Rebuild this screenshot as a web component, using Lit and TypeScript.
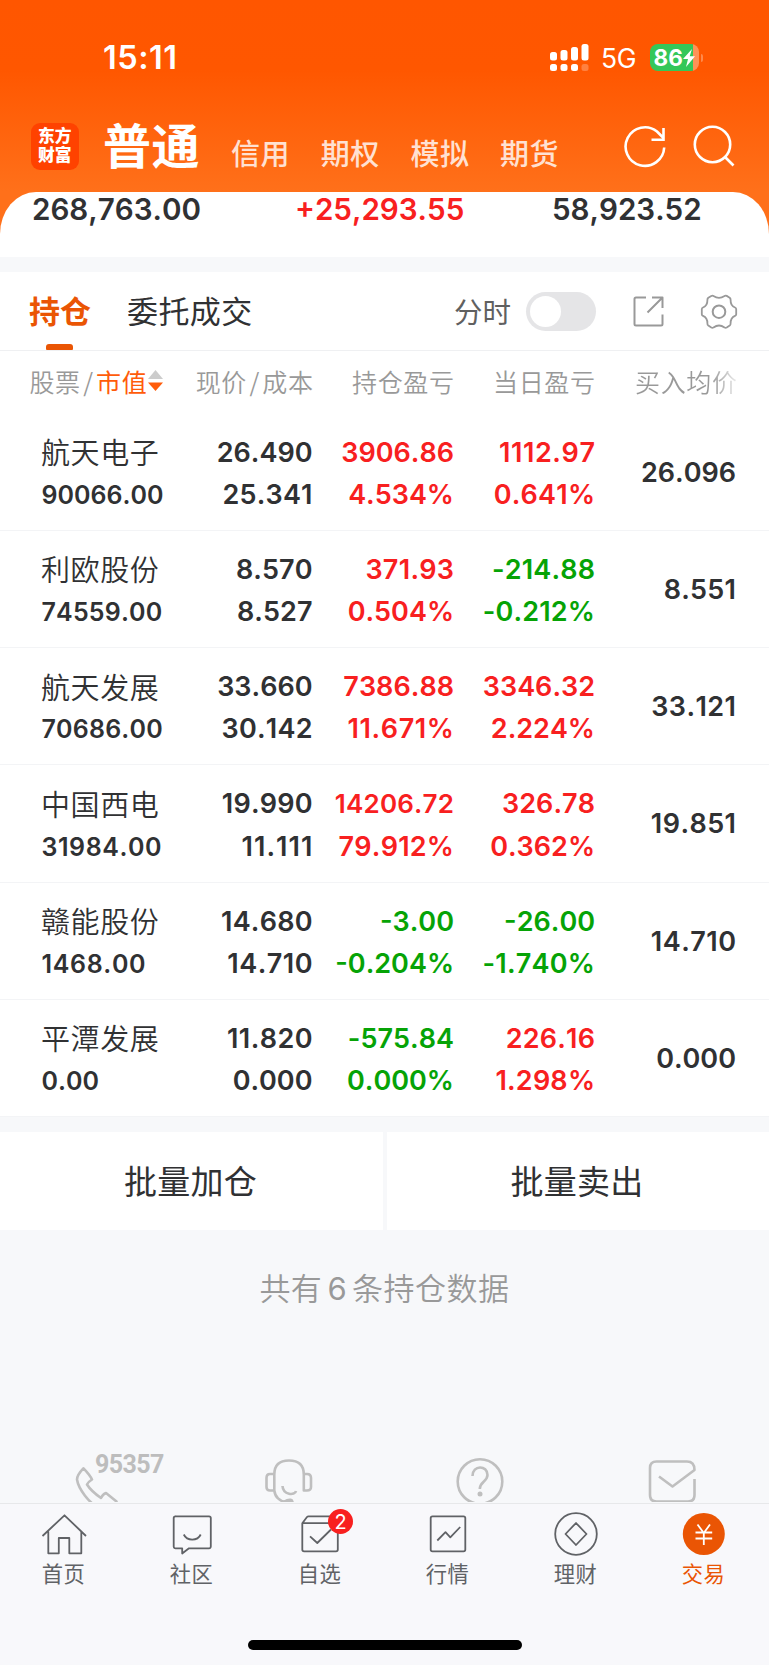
import { LitElement, html, css, svg } from "lit";
import { customElement } from "lit/decorators.js";
import { classMap } from "lit/directives/class-map.js";
import { styleMap } from "lit/directives/style-map.js";

interface Holding {
  name: string;
  value: string;
  price: string;
  cost: string;
  profit: string;
  profitRate: string;
  day: string;
  dayRate: string;
  avg: string;
  profitDown?: boolean;
  dayDown?: boolean;
}

const HOLDINGS: Holding[] = [
  { name: "航天电子", value: "90066.00", price: "26.490", cost: "25.341", profit: "3906.86", profitRate: "4.534%", day: "1112.97", dayRate: "0.641%", avg: "26.096" },
  { name: "利欧股份", value: "74559.00", price: "8.570", cost: "8.527", profit: "371.93", profitRate: "0.504%", day: "-214.88", dayRate: "-0.212%", avg: "8.551", dayDown: true },
  { name: "航天发展", value: "70686.00", price: "33.660", cost: "30.142", profit: "7386.88", profitRate: "11.671%", day: "3346.32", dayRate: "2.224%", avg: "33.121" },
  { name: "中国西电", value: "31984.00", price: "19.990", cost: "11.111", profit: "14206.72", profitRate: "79.912%", day: "326.78", dayRate: "0.362%", avg: "19.851" },
  { name: "赣能股份", value: "1468.00", price: "14.680", cost: "14.710", profit: "-3.00", profitRate: "-0.204%", day: "-26.00", dayRate: "-1.740%", avg: "14.710", profitDown: true, dayDown: true },
  { name: "平潭发展", value: "0.00", price: "11.820", cost: "0.000", profit: "-575.84", profitRate: "0.000%", day: "226.16", dayRate: "1.298%", avg: "0.000", profitDown: true },
];

const count = (text: string, ch: string) => text.split(ch).length - 1;

/** Evens out a figure's width: narrow digits get their missing advance back as tracking. */
const tracked = (text: string, one = 1.3, seven = 0.3) => {
  const extra = (count(text, "1") * one + count(text, "7") * seven) / text.length;
  return styleMap({ letterSpacing: `${extra.toFixed(2)}px`, marginRight: `${(-extra).toFixed(2)}px` });
};

const figure = (text: string) =>
  html`<span class=${classMap({ small: text.length > 7 && !text.includes("%") })} style=${tracked(text)}>${text}</span>`;

const TABS = [
  { label: "首页", icon: svg`<path d="M42.500 1536 64.500 1515.300 86 1536M48.300 1531.500V1553.300H58.800V1538H69.300V1553.300H81.300V1531.500"/>` },
  { label: "社区", icon: svg`<path d="M175.500 1516.300H209a1.800 1.800 0 0 1 1.800 1.800V1546.500a1.800 1.800 0 0 1-1.800 1.800H189L182.200 1553.500V1548.300H175.500a1.800 1.800 0 0 1-1.800-1.800V1518.100a1.800 1.800 0 0 1 1.800-1.800Z"/><path d="M183.800 1534.500C187 1541.400 197.500 1541.400 200.700 1534.500"/>` },
  { label: "自选", icon: svg`<path d="M302.300 1523.200 307 1517a2 2 0 0 1 1.500-.700H331.500a2 2 0 0 1 1.500.7L337.800 1523.200V1549.500a1.800 1.800 0 0 1-1.800 1.800H304.100a1.800 1.800 0 0 1-1.800-1.800ZM302.300 1523.200H337.800M310 1536.300 317.300 1543 331 1529.500"/>` },
  { label: "行情", icon: svg`<rect x="430.700" y="1516.300" width="34.600" height="35" rx="1.800"/><path d="M437.300 1540.500 445.500 1532.200 450.300 1537.300 460.200 1527"/>` },
  { label: "理财", icon: svg`<circle cx="576" cy="1534" r="20.800"/><path d="M576 1523 586.500 1534 576 1545 565.500 1534Z"/>` },
  { label: "交易", icon: svg`<circle cx="703.800" cy="1534" r="21" fill="#ea5504" stroke="none"/><path d="M697.500 1524.500 703.800 1533 710 1524.500M703.800 1533V1545M695.500 1532.500H712.200M695.500 1538.500H712.200" stroke="#fff"/>`, active: true },
];

@customElement("app-root")
export class AppRoot extends LitElement {
  static styles = css`
    :host { display: block; width: 769px; height: 1665px; overflow: hidden; background: #f7f8fa; color: #303133; font-family: "Noto Sans CJK SC", sans-serif; }
    * { box-sizing: border-box; }
    svg { display: block; fill: none; flex: none; }
    .page { display: flex; flex-direction: column; height: 1665px; }
    .num { font-family: Inter, sans-serif; font-weight: 580; font-kerning: none; }
    .top { height: 257px; background: linear-gradient(#ff5600 0, #ff5700 70px, #ff701a 191px); display: flex; flex-direction: column; flex: none; }
    .status { height: 115px; display: flex; align-items: center; padding: 0 66px 0 103px; color: #fff; flex: none; }
    .time { font-size: 32.500px; flex: 1; letter-spacing: .5px; }
    .net { font-family: Inter, sans-serif; font-size: 26.500px; font-weight: 420; margin: 1px 13px 0 12px; letter-spacing: -.3px; width: 36px; }
    .battery { display: flex; align-items: center; }
    .level { width: 48.500px; height: 27px; border-radius: 8px; background: linear-gradient(90deg, #34c759 42.500px, #ff9257 42.500px); display: flex; align-items: center; padding-left: 3.500px; font-size: 22.500px; font-weight: 700; }
    .nub { width: 2.500px; height: 8px; background: #ff8a4b; border-radius: 0 3px 3px 0; margin-left: 2px; }
    .nav { height: 76.500px; display: flex; flex: none; color: #fff; padding-left: 31px; }
    .nav-tools { margin-left: auto; }
    .logo { margin-top: 8px; width: 47.500px; height: 47px; border-radius: 9px; background: #ff4200; padding: 2.500px 0 0 7px; font-size: 16.800px; line-height: 19.500px; font-weight: 900; flex: none; }
    .main-tab { font-size: 48px; line-height: 60px; font-weight: 700; margin: -2px 0 0 24.500px; width: 98px; letter-spacing: .5px; flex: none; }
    .modes { display: flex; gap: 30.700px; margin: 17px 0 0 30px; font-size: 29px; line-height: 40px; font-weight: 500; color: #ffe1d2; letter-spacing: .5px; }
    .sheet { flex: 1; border-radius: 36px 36px 0 0 / 42px 42px 0 0; background: #fff; display: grid; grid-template-columns: 263px 257px 1fr; padding: 0 0 0 32px; font-size: 29.600px; line-height: 35px; }
    .up { color: #f8201f; }
    .down { color: #06a306; }
    .band { height: 15px; flex: none; }
    .panel { background: #fff; flex: none; }
    .tabs { height: 79px; border-bottom: 1px solid #eff0f2; display: flex; align-items: stretch; padding-left: 29px; }
    .tab { width: 61px; color: #ea5504; font-size: 31px; line-height: 76px; font-weight: 700; position: relative; white-space: nowrap; }
    .bar { position: absolute; left: 17px; bottom: 0; width: 27px; height: 6px; border-radius: 3px 3px 1px 1px; background: #ea5504; }
    .orders { margin-left: 37px; font-size: 31px; line-height: 76px; width: 124px; letter-spacing: .4px; white-space: nowrap; }
    .split { margin-left: 203px; font-size: 28.500px; line-height: 77px; color: #606060; width: 58px; white-space: nowrap; }
    .switch { margin: 20px 0 0 14px; width: 70px; height: 39px; border-radius: 20px; background: #e5e5e7; padding: 4px; flex: none; }
    .knob { width: 31px; height: 31px; border-radius: 50%; background: #fff; }
    .tools { margin: 19px 0 0 35px; }
    .cols { display: grid; grid-template-columns: 166px 118px 141px 141px 142px; padding: 10px 0 0 29.500px; height: 62.500px; align-items: start; font-size: 25px; line-height: 40px; font-weight: 350; color: #999; text-align: right; letter-spacing: .6px; white-space: nowrap; }
    .sort { display: flex; text-align: left; align-items: center; }
    .sort svg { margin-left: 1px; }
    .slash { margin: 0 2.500px; }
    .sort b { color: #ff5c0a; font-weight: 400; }
    .fade { background: linear-gradient(90deg, #999 74%, #e8e8e8 98%); -webkit-background-clip: text; background-clip: text; color: transparent; justify-self: end; }
    .row { height: 117.300px; border-bottom: 1.500px solid #f3f4f6; display: grid; grid-template-columns: 124px 147.500px 141.500px 141px 141px; padding: 18px 0 0 41px; font-size: 27px; line-height: 42.300px; text-align: right; }
    .cell { display: flex; flex-direction: column; }
    .small { font-size: 26px; }
    .name { text-align: left; font-family: "Noto Sans CJK SC", sans-serif; font-size: 29px; font-weight: 350; letter-spacing: .6px; white-space: nowrap; position: relative; top: -1.500px; }
    .value { text-align: left; font-size: 25px; padding-left: .5px; }
    .avg { padding-top: 20px; }
    .batch { display: grid; grid-template-columns: 382.500px 382.500px; gap: 4px; height: 98px; flex: none; }
    .batch div { background: #fff; text-align: center; font-size: 33px; line-height: 96px; letter-spacing: .3px; padding-right: 1.500px; }
    .total { height: 208px; padding-top: 37px; text-align: center; color: #999; font-size: 31px; line-height: 40px; font-weight: 350; letter-spacing: .5px; flex: none; }
    .total span { font-family: Inter, sans-serif; margin: 0 5px; font-weight: 400; }
    .service { display: flex; height: 64.500px; position: relative; overflow: hidden; flex: none; }
    .hotline { position: absolute; left: 95px; top: 12px; font: 700 25px/30px Roboto, sans-serif; color: #bdbdbd; letter-spacing: -.6px; }
    .footer { border-top: 1.500px solid #e7e8ea; height: 162.500px; background: #f8f8fb; display: flex; flex-direction: column; flex: none; }
    .menu { display: grid; grid-template-columns: repeat(6, 128px); height: 136px; padding-top: 6.500px; }
    .item { display: flex; flex-direction: column; align-items: center; color: #606266; font-size: 21.300px; line-height: 30px; letter-spacing: .5px; position: relative; }
    .item svg { stroke: #606266; stroke-width: 1.800; }
    .label { margin-left: -1px; }
    .active { color: #ea5504; }
    .badge { position: absolute; left: 72px; top: -1px; width: 25px; height: 25px; border-radius: 50%; background: #f8201f; color: #fff; font: 400 20px/26px Inter, sans-serif; text-align: center; letter-spacing: 0; }
    .home { width: 274px; height: 10px; border-radius: 5px; background: #000; align-self: center; }
  `;

  render() {
    return html`<div class="page">
      <div class="top">
        <div class="status">
          <span class="time num">15:11</span>
          <svg width="39" height="29" viewBox="0 0 39 29">
            <g fill="#fff"><rect x="0" y="9" width="7" height="8.500" rx="2.500"/><rect x="10.500" y="7" width="7" height="10.500" rx="2.500"/><rect x="21" y="4" width="7" height="13.500" rx="2.500"/><rect x="31.500" y="1" width="7" height="16.500" rx="2.500"/>
            <rect x="0" y="21" width="7" height="7" rx="2.500"/><rect x="10.500" y="21" width="7" height="7" rx="2.500"/><rect x="21" y="21" width="7" height="7" rx="2.500"/><rect x="31.500" y="21" width="7" height="7" rx="2.500" opacity=".25"/></g>
          </svg>
          <span class="net">5G</span>
          <div class="battery"><div class="level num">86<svg width="12" height="18" viewBox="0 0 12 18"><path d="M9 0 0 10H5L3 18 12 7.300H6.700Z" fill="#fff"/></svg></div><div class="nub"></div></div>
        </div>
        <div class="nav">
          <div class="logo">东方<br>财富</div>
          <div class="main-tab">普通</div>
          <div class="modes"><span>信用</span><span>期权</span><span>模拟</span><span>期货</span></div>
          <svg class="nav-tools" width="145" height="76" viewBox="624 115 145 76" stroke="#fff" stroke-width="2.600"><path d="M664.200 147.500A19.300 19.300 0 1 1 657 131.500L663.500 138M663.500 128V139.700H651.500"/><circle cx="712.500" cy="144.500" r="17.700"/><path d="M725 157 733.500 165.500"/></svg>
        </div>
        <div class="sheet num"><span>268,763.00</span><span class="up">+25,293.55</span><span>58,923.52</span></div>
      </div>
      <div class="band"></div>
      <div class="panel">
        <div class="tabs">
          <div class="tab">持仓<i class="bar"></i></div>
          <div class="orders">委托成交</div>
          <div class="split">分时</div>
          <div class="switch"><div class="knob"></div></div>
          <svg class="tools" width="110" height="42" viewBox="631 291 110 42" stroke="#999" stroke-width="2" stroke-linejoin="round"><path d="M646 297.500H636a1.500 1.500 0 0 0-1.500 1.500V324a1.500 1.500 0 0 0 1.500 1.500H661a1.500 1.500 0 0 0 1.500-1.500V314.500M652 297.500H662.500V308M662.500 297.500 647.500 312.500"/>
          <path stroke-width="1.800" d="M713.500 296C717 298.400 721 298.400 724.500 296Q725.500 295.200 726.700 295.900L729.700 297.700Q730.700 298.500 730.600 300C730.500 303.500 732 306.300 735 307.500Q736.200 308 736.200 309.200V314.200Q736.200 315.400 735 315.900C732 317.200 730.500 320 730.600 323.400Q730.700 324.900 729.700 325.600L726.700 327.500Q725.500 328.200 724.500 327.400C721 325 717 325 713.500 327.400Q712.500 328.200 711.300 327.500L708.300 325.600Q707.300 324.900 707.400 323.400C707.500 320 706 317.200 703 315.900Q701.800 315.400 701.800 314.200V309.200Q701.800 308 703 307.500C706 306.300 707.500 303.500 707.400 300Q707.300 298.500 708.300 297.700L711.300 295.900Q712.500 295.200 713.500 296Z"/><circle cx="719" cy="311.700" r="6.300"/></svg>
        </div>
        <div class="cols">
          <span class="sort">股票<span class="slash">/</span><b>市值</b><svg width="15" height="22" viewBox="0 0 15 22"><path d="M0 9 7.500 0 15 9Z" fill="#ccc"/><path d="M0 12.500H15L7.500 21Z" fill="#ff5c0a"/></svg></span>
          <span>现价<span class="slash">/</span>成本</span><span>持仓盈亏</span><span>当日盈亏</span><span class="fade">买入均价</span>
        </div>
        ${HOLDINGS.map((h) => html`<div class="row num">
          <div class="cell"><span class="name">${h.name}</span><span class="value" style=${tracked(h.value, 4.5, 1.5)}>${h.value}</span></div>
          <div class="cell">${figure(h.price)}${figure(h.cost)}</div>
          <div class="cell ${classMap({ up: !h.profitDown, down: !!h.profitDown })}">${figure(h.profit)}${figure(h.profitRate)}</div>
          <div class="cell ${classMap({ up: !h.dayDown, down: !!h.dayDown })}">${figure(h.day)}${figure(h.dayRate)}</div>
          <div class="cell avg">${figure(h.avg)}</div>
        </div>`)}
      </div>
      <div class="band"></div>
      <div class="batch"><div>批量加仓</div><div>批量卖出</div></div>
      <div class="total">共有<span>6</span>条持仓数据</div>
      <div class="service">
        <svg width="769" height="64" viewBox="0 1438 769 64" stroke="#bfbfbf" stroke-width="2.600" stroke-linejoin="round">
          <path d="M83.500 1468.300C80 1472 77 1475 77 1479.500C78.500 1489 89 1503 99 1508C108 1510 114 1506 116.500 1501.500L106 1493Q103 1494 101 1498Q91 1491 87 1484.500Q88 1482 92 1479.500Q90 1475 83.500 1468.300Z"/>
          <path d="M274.300 1474.500C274.300 1465 279 1460.500 289 1460.500C299 1460.500 303.800 1465 303.800 1474.500V1490.500M274.300 1474V1490.500C275 1497 280 1501.500 285 1501.500M274.300 1474H270Q266.500 1474 266.500 1478V1487Q266.500 1490.500 270 1490.500H274.300ZM303.800 1474H307Q311 1474 311 1478V1487Q311 1490.500 307 1490.500H303.800ZM282.500 1486C283 1495 295 1496 296 1491"/><path d="M284 1504V1500.500Q287 1498 291 1498.500Q294 1499 294 1504Z" fill="#bfbfbf" stroke="none"/>
          <circle cx="480" cy="1481.500" r="22.300"/><path d="M472.500 1476C472.500 1464.500 487.500 1465 487.500 1475C487.500 1481.500 479.800 1481.500 479.800 1489"/><circle cx="480" cy="1494" r="2.500" fill="#bfbfbf" stroke="none"/>
          <path d="M694.500 1479V1495Q694.500 1501.500 688 1501.500H656.500Q650 1501.500 650 1495V1468Q650 1461.500 656.500 1461.500H687Q694.500 1461.500 694.500 1470L672.500 1486.500 659 1476.500"/>
        </svg>
        <span class="hotline">95357</span>
      </div>
      <div class="footer">
        <div class="menu">${TABS.map((t, i) => html`<div class="item ${classMap({ active: !!t.active })}">
          <svg width="48" height="48" viewBox="${40 + i * 128} 1510 48 48" stroke-linejoin="round">${t.icon}</svg>
          <span class="label">${t.label}</span>${i === 2 ? html`<span class="badge">2</span>` : ""}
        </div>`)}</div>
        <div class="home"></div>
      </div>
    </div>`;
  }
}
